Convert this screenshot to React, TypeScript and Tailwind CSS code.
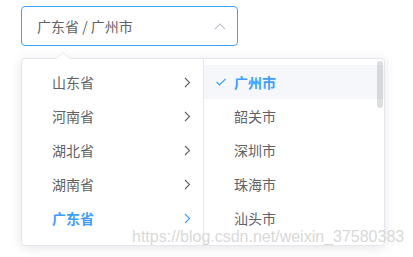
import React from "react";

const font = { fontFamily: '"Noto Sans CJK SC", "Liberation Sans", sans-serif' };

function ChevronRight({ color }: { color: string }) {
  return (
    <svg width="7" height="11" viewBox="0 0 7 11" fill="none">
      <path d="M1 1 L5.5 5.5 L1 10" stroke={color} strokeWidth="1.1" />
    </svg>
  );
}

export default function App() {
  const provinces = ["山东省", "河南省", "湖北省", "湖南省", "广东省"];
  const cities = ["广州市", "韶关市", "深圳市", "珠海市", "汕头市"];
  return (
    <div className="relative w-[413px] h-[257px] bg-white overflow-hidden" style={font}>
      <div className="flex flex-col pl-[21px] pt-[6px] gap-[12px]">
        <div className="w-[217px] h-[40px] border border-[#409eff] rounded-[4px] flex items-center justify-between pl-[15px] pr-[11px] text-[14px] text-[#606266]">
          <span>广东省 / 广州市</span>
          <svg width="12" height="7" viewBox="0 0 12 7" fill="none">
            <path d="M1 6 L6 1 L11 6" stroke="#c0c4cc" strokeWidth="1.1" />
          </svg>
        </div>
        <div className="relative w-[364px] h-[188px] border border-[#e4e7ed] rounded-[4px] bg-white shadow-[0_2px_12px_0_rgba(0,0,0,0.1)] flex text-[14px]">
          <svg className="absolute left-[34px] top-[-7px]" width="14" height="7" viewBox="0 0 14 7">
            <path d="M0 7 L7 0.5 L14 7" fill="white" stroke="#e4e7ed" strokeWidth="1" />
            <rect x="0" y="6.5" width="14" height="1" fill="white" />
          </svg>
          <div className="w-[182px] border-r border-[#e4e7ed] py-[6px] flex flex-col">
            {provinces.map((p, i) => {
              const active = i === 4;
              return (
                <div
                  key={p}
                  className={
                    "h-[34px] flex items-center justify-between pl-[30px] pr-[12px] " +
                    (active ? "text-[#409eff] font-bold" : "text-[#606266]")
                  }
                >
                  <span>{p}</span>
                  <ChevronRight color={active ? "#409eff" : "#606266"} />
                </div>
              );
            })}
          </div>
          <div className="relative flex-1 py-[6px] flex flex-col overflow-hidden">
            {cities.map((c, i) => {
              const active = i === 0;
              return (
                <div
                  key={c}
                  className={
                    "h-[34px] shrink-0 flex items-center " +
                    (active ? "bg-[#f5f7fa] text-[#409eff] font-bold pl-[12px]" : "text-[#606266] pl-[30px]")
                  }
                >
                  {active && (
                    <svg className="mr-[8px]" width="10" height="8" viewBox="0 0 10 8" fill="none">
                      <path d="M0.5 4 L3.5 7 L9.5 1" stroke="#409eff" strokeWidth="1.1" />
                    </svg>
                  )}
                  <span>{c}</span>
                </div>
              );
            })}
            <div className="absolute right-[1px] top-[2px] w-[6px] h-[47px] rounded-[3px] bg-[rgba(144,147,153,0.3)]" />
          </div>
        </div>
      </div>
      <div
        className="absolute left-[132px] top-[228px] text-[16px] leading-[18px] text-[#d9d9d9] whitespace-nowrap"
        style={{ fontFamily: '"Liberation Sans", Arial, sans-serif' }}
      >
        https://blog.csdn.net/weixin_37580383
      </div>
    </div>
  );
}
